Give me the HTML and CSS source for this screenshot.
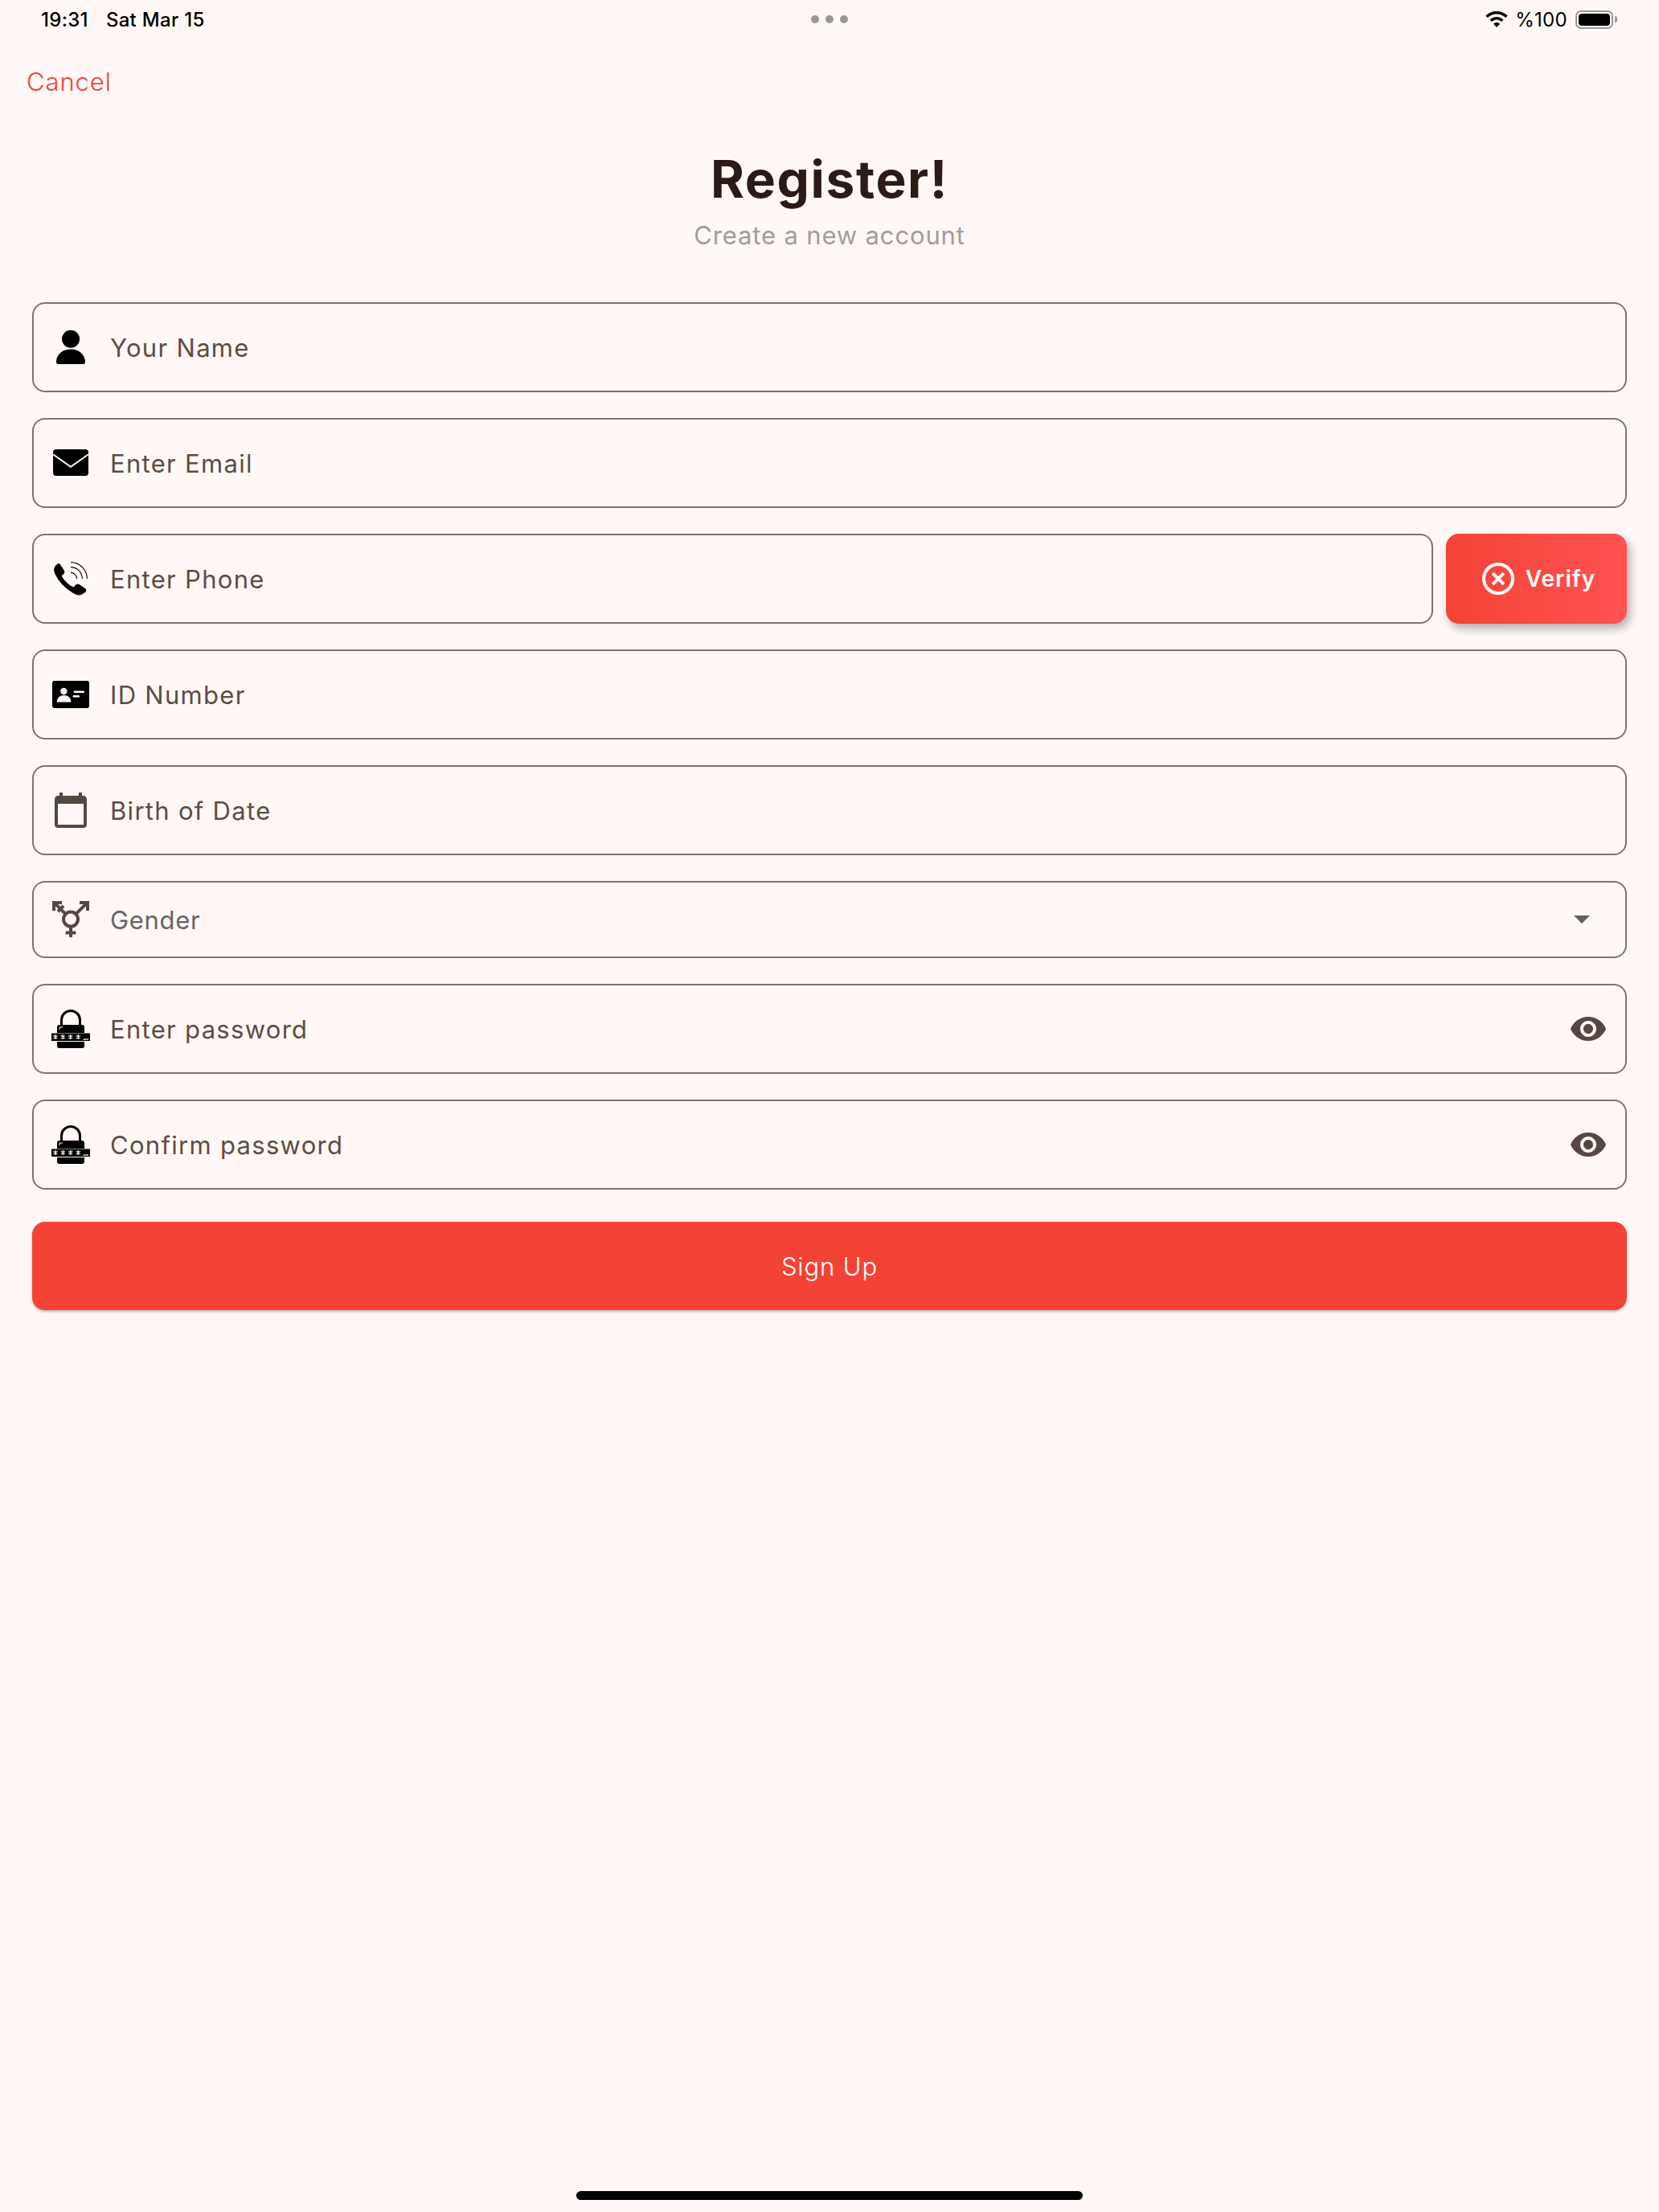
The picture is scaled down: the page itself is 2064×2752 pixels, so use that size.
FILE: index.html
```html
<!DOCTYPE html>
<html lang="en">
<head>
  <meta charset="UTF-8">
  <meta name="viewport" content="width=device-width, initial-scale=1.0">
  <title>Register</title>
  <link rel="stylesheet" href="styles.css">
</head>
<body>
  <svg class="defs" xmlns="http://www.w3.org/2000/svg">
    <symbol id="icon-lock" viewBox="0 0 48 48">
      <path d="M12.500 19V13a11.500 11.500 0 0 1 23 0v6" fill="none" stroke="#000" stroke-width="3"/>
      <path d="M10 19h28a3 3 0 0 1 3 3v7H7v-7a3 3 0 0 1 3-3zM7 40h34v5a3 3 0 0 1-3 3H10a3 3 0 0 1-3-3z" fill="#000"/>
      <rect x="0" y="29.500" width="48" height="9.500" fill="#000"/>
      <path d="M10 25v-3h4" fill="none" stroke="#fff8f6" stroke-width="1"/>
      <g stroke="#fff8f6" stroke-width="1.300">
        <path d="M5 31v6M2.400 32.500l5.200 3M2.400 35.500l5.200-3"/>
        <path d="M14.300 31v6M11.700 32.500l5.200 3M11.700 35.500l5.200-3"/>
        <path d="M23.700 31v6M21.100 32.500l5.200 3M21.100 35.500l5.200-3"/>
        <path d="M33.300 31v6M30.700 32.500l5.200 3M30.700 35.500l5.200-3"/>
        <path d="M39.500 37h6.500"/>
      </g>
    </symbol>
    <symbol id="icon-eye" viewBox="0 0 24 24">
      <path d="M12 4.500C7 4.500 2.730 7.610 1 12c1.730 4.390 6 7.500 11 7.500s9.270-3.110 11-7.500c-1.730-4.390-6-7.500-11-7.500zM12 17c-2.760 0-5-2.240-5-5s2.240-5 5-5 5 2.240 5 5-2.240 5-5 5zm0-8c-1.660 0-3 1.340-3 3s1.340 3 3 3 3-1.340 3-3-1.340-3-3-3z"/>
    </symbol>
  </svg>

  <div class="status-bar">
    <div class="status-left"><span>19:31</span><span>Sat Mar 15</span></div>
    <div class="status-dots"><i></i><i></i><i></i></div>
    <div class="status-right">
      <svg class="wifi" viewBox="0 0 28 20">
        <path d="M14 0C8.700 0 3.900 2 .3 5.500l2.400 2.600C5.600 5.200 9.600 3.500 14 3.500s8.400 1.700 11.300 4.600l2.400-2.600C24.100 2 19.300 0 14 0z"/>
        <path d="M14 7c-3.300 0-6.200 1.300-8.400 3.400l2.400 2.600c1.500-1.500 3.600-2.400 6-2.400s4.500.9 6 2.400l2.400-2.600C20.200 8.300 17.300 7 14 7z"/>
        <path d="M14 14c-1.600 0-3 .6-4 1.700l4 4.300 4-4.300c-1-1.100-2.400-1.700-4-1.700z"/>
      </svg>
      <span>%100</span>
      <div class="battery"><div class="battery-fill"></div></div>
      <div class="battery-tip"></div>
    </div>
  </div>

  <div class="top-row"><a href="#" class="cancel">Cancel</a></div>

  <div class="heading">
    <h1>Register!</h1>
    <p>Create a new account</p>
  </div>

  <form class="register-form">
    <div class="field">
      <svg class="icon" viewBox="0 0 24 24">
        <circle cx="12" cy="6.900" r="5.500"/>
        <path d="M4.700 22.500a1.700 1.700 0 0 1-1.700-1.800C3.400 16.200 7.200 13.300 12 13.300s8.600 2.900 9 7.400a1.700 1.700 0 0 1-1.700 1.800z"/>
      </svg>
      <span class="placeholder">Your Name</span>
    </div>

    <div class="field">
      <svg class="icon" viewBox="0 0 24 24">
        <rect x="1" y="3.500" width="22" height="16.500" rx="2"/>
        <path d="M1 6.600l11 7.800 11-7.800" fill="none" stroke="#fff8f6" stroke-width="1"/>
      </svg>
      <span class="placeholder">Enter Email</span>
    </div>

    <div class="field-row">
      <div class="field">
        <svg class="icon" viewBox="0 0 24 24">
          <path stroke="#000" stroke-width=".6" stroke-linejoin="round" d="M5 3l2.600 3.900c.5.8.3 1.500-.4 2.100L6 10c.8 2.600 5 6.800 8 7.600l1.100-1.400c.5-.6 1.300-.8 2-.4l3.800 2.600c.6.500.5 1.200.1 1.700L19.500 21c-1.400 1.300-3.800 1.100-6.400-.6C9 17.800 4.600 13.300 2.600 9.100 1.600 7 1.700 5 3 3.900L3.600 3.300C4 2.900 4.600 2.700 5 3z"/>
          <g fill="none" stroke="#000" stroke-width=".55">
            <path d="M12 1.800A10.200 10.200 0 0 1 22.200 12"/>
            <path d="M12 4.800A7.200 7.200 0 0 1 19.200 12"/>
            <path d="M12 8.200A3.800 3.800 0 0 1 15.800 12"/>
          </g>
        </svg>
        <span class="placeholder">Enter Phone</span>
      </div>
      <button type="button" class="verify">
        <svg class="icon outline" viewBox="0 0 24 24" stroke="#fff">
          <circle cx="12" cy="12" r="9" stroke-width="2"/>
          <path d="M8.600 8.600l6.800 6.800M15.400 8.600l-6.800 6.800" stroke-width="2"/>
        </svg>
        Verify
      </button>
    </div>

    <div class="field">
      <svg class="icon" viewBox="0 0 24 24">
        <path d="M2 3.500h20a1.500 1.500 0 0 1 1.500 1.500v14a1.500 1.500 0 0 1-1.500 1.500H2A1.500 1.500 0 0 1 .5 19V5A1.500 1.500 0 0 1 2 3.500z"/>
        <g fill="#fff8f6">
          <circle cx="7.700" cy="10" r="2.100"/>
          <path d="M3.400 16.700c0-2.600 1.900-4.200 4.400-4.200s4.400 1.600 4.400 4.200z"/>
          <rect x="13.800" y="9.700" width="6.700" height="1.300" rx=".6"/>
          <rect x="13.300" y="12.500" width="4.200" height="1.300" rx=".6"/>
        </g>
      </svg>
      <span class="placeholder">ID Number</span>
    </div>

    <div class="field">
      <svg class="icon brown" viewBox="0 0 24 24">
        <path d="M20 3h-1V1h-2v2H7V1H5v2H4c-1.100 0-2 .9-2 2v16c0 1.100.9 2 2 2h16c1.100 0 2-.9 2-2V5c0-1.100-.9-2-2-2zm0 18H4V8h16v13z"/>
      </svg>
      <span class="placeholder">Birth of Date</span>
    </div>

    <div class="field field-select">
      <svg class="icon outline" viewBox="0 0 24 24" stroke="#574741" stroke-width="2">
        <circle cx="12" cy="11.800" r="4.500"/>
        <path d="M12 16.300V23M8.800 20.200h6.400"/>
        <path d="M8.800 8.600L2.500 2.300M15.200 8.600l6.300-6.300"/>
        <path d="M1.500 6.500V1.500h5M22.500 6.500V1.500h-5"/>
        <path d="M7.500 3.500L4 7"/>
      </svg>
      <span class="placeholder grey">Gender</span>
      <div class="caret"></div>
    </div>

    <div class="field">
      <svg class="icon"><use href="#icon-lock"/></svg>
      <span class="placeholder">Enter password</span>
      <svg class="icon brown"><use href="#icon-eye"/></svg>
    </div>

    <div class="field">
      <svg class="icon"><use href="#icon-lock"/></svg>
      <span class="placeholder">Confirm password</span>
      <svg class="icon brown"><use href="#icon-eye"/></svg>
    </div>

    <button type="button" class="sign-up">Sign Up</button>
  </form>

  <div class="home-bar"></div>
</body>
</html>
```

FILE: styles.css
```css
* {
  box-sizing: border-box;
}

body {
  margin: 0;
  height: 2752px;
  display: flex;
  flex-direction: column;
  background-color: #fff8f6;
  font-family: Inter, "Noto Sans", sans-serif;
  overflow: hidden;
}

.defs {
  display: none;
}

.status-bar {
  height: 48px;
  padding: 0 52px 0 51px;
  display: grid;
  grid-template-columns: 1fr auto 1fr;
  align-items: center;
  font-size: 24px;
  letter-spacing: 0.3px;
  color: #000;
}

.status-left {
  display: flex;
  gap: 22px;
  font-weight: 500;
}

.status-dots {
  display: flex;
  gap: 8px;
}

.status-dots i {
  width: 10px;
  height: 10px;
  border-radius: 50%;
  background: #999;
}

.status-right {
  display: flex;
  justify-content: flex-end;
  align-items: center;
}

.wifi {
  width: 28px;
  height: 20px;
  margin-right: 9px;
}

.battery {
  width: 47px;
  height: 23px;
  margin-left: 10px;
  padding: 2px;
  border: 2px solid #999;
  border-radius: 7px;
}

.battery-fill {
  height: 100%;
  background: #000;
  border-radius: 4px;
}

.battery-tip {
  width: 3px;
  height: 8px;
  margin-left: 2px;
  background: #999;
  border-radius: 0 3px 3px 0;
}

.top-row {
  padding: 30px 33px 0;
  height: 80px;
}

.cancel {
  color: #f44336;
  font-size: 31px;
  font-weight: 350;
  line-height: 48px;
  letter-spacing: 0.9px;
  text-decoration: none;
}

.heading {
  text-align: center;
  margin-top: 56px;
}

.heading h1 {
  margin: 0;
  font-size: 64px;
  line-height: 78px;
  font-weight: 700;
  letter-spacing: 1.6px;
  color: #2b1b17;
}

.heading p {
  margin: 7px 0 0;
  font-size: 31px;
  line-height: 48px;
  letter-spacing: 0.85px;
  color: #9e9e9e;
}

.register-form {
  margin-top: 59px;
  padding: 0 40px;
  display: flex;
  flex-direction: column;
  gap: 32px;
}

.field-row {
  display: flex;
  gap: 16px;
}

.field-row .field {
  flex: 1;
}

.field {
  height: 112px;
  padding: 0 22px;
  display: flex;
  align-items: center;
  gap: 25px;
  border: 2px solid #857069;
  border-radius: 16px;
}

.field-select {
  height: 96px;
}

.icon {
  width: 48px;
  height: 48px;
  flex-shrink: 0;
  fill: #000;
}

.icon.brown {
  fill: #574741;
}

.icon.outline {
  fill: none;
}

.placeholder {
  flex: 1;
  padding-top: 1px;
  font-size: 31px;
  letter-spacing: 1.3px;
  color: #5f4b45;
}

.placeholder.grey {
  letter-spacing: 0.7px;
  color: #666;
}

.caret {
  width: 0;
  height: 0;
  margin-right: 22px;
  border-left: 10px solid transparent;
  border-right: 10px solid transparent;
  border-top: 10px solid #616161;
}

.verify {
  width: 225px;
  height: 112px;
  padding: 0 0 0 2px;
  display: flex;
  align-items: center;
  justify-content: center;
  gap: 10px;
  border: none;
  border-radius: 16px;
  background: linear-gradient(90deg, #f44336, #ff5252);
  box-shadow: 4px 6px 12px rgba(0, 0, 0, 0.3);
  color: #fff;
  font-family: inherit;
  font-size: 28px;
  font-weight: 600;
  letter-spacing: 1px;
}

.sign-up {
  height: 110px;
  margin-top: 8px;
  border: none;
  border-radius: 16px;
  background-color: #f44336;
  box-shadow: 0 2px 3px rgba(0, 0, 0, 0.25);
  color: #fff;
  font-family: inherit;
  font-size: 31px;
  font-weight: 350;
  letter-spacing: 0.9px;
}

.home-bar {
  width: 630px;
  height: 11px;
  margin: auto auto 15px;
  border-radius: 6px;
  background: #000;
}
```
